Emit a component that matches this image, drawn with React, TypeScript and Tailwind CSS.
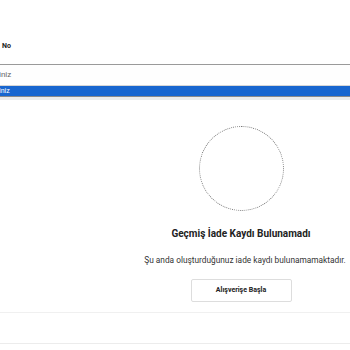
import React from "react";

export default function App() {
  return (
    <div
      className="w-[350px] h-[350px] bg-white overflow-hidden flex flex-col"
      style={{ fontFamily: "Roboto, 'Liberation Sans', sans-serif" }}
    >
      <div className="h-[41px]" />
      <div className="h-[10px] pl-[2px] text-[7px] leading-[10px] font-bold text-[#222]">No</div>
      <div className="h-[13px]" />
      <div className="h-[1px] bg-[#9a9a9a]" />
      <div className="h-[20px] flex items-center text-[8px] text-[#666] pl-0 bg-[#fefefe]">
        <span className="-ml-[1px]">iniz</span>
      </div>
      <div className="h-[1px] bg-[#d6d6d6]" />
      <div className="h-[10px] bg-[#1866cf] flex items-center text-[7px] text-white">
        <span className="-ml-[1px]">iniz</span>
      </div>
      <div className="h-[1px] bg-[#8a8a8a]" />
      <div className="h-[3px] bg-[#ececec]" />
      <div className="h-[26px]" />
      <div className="ml-[132px] w-[218px] flex flex-col items-center">
        <div className="w-[85px] h-[85px] rounded-full border border-dotted border-[#777]" />
        <div className="mt-[17px] text-[10px] leading-[12px] font-bold text-[#222]">
          Geçmiş İade Kaydı Bulunamadı
        </div>
        <div className="mt-[15px] text-[8.3px] leading-[10px] text-[#333] ml-[8px] whitespace-nowrap">
          Şu anda oluşturduğunuz iade kaydı bulunamamaktadır.
        </div>
        <div className="mt-[14px] w-[101px] h-[23px] border border-[#ddd] rounded-[2px] flex items-center justify-center text-[7px] font-bold text-[#222]">
          Alışverişe Başla
        </div>
      </div>
      <div className="h-[10px]" />
      <div className="h-[1px] bg-[#f0f0f0]" />
      <div className="h-[30px]" />
      <div className="h-[1px] bg-[#ececec]" />
    </div>
  );
}
